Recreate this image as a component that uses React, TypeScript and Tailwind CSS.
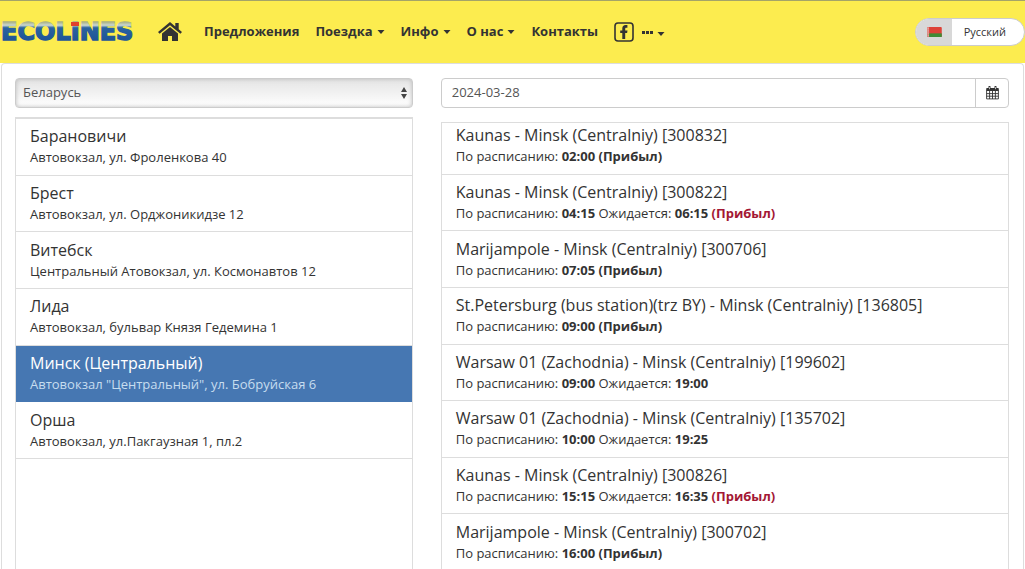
/** @format */

import React, { useState } from "react";

interface Stop {
    name: string;
    address: string;
}

interface Arrival {
    route: string;
    planned: string;
    expected?: string;
    arrived?: boolean;
}

const stops: Stop[] = [
    { name: "Барановичи", address: "Автовокзал, ул. Фроленкова 40" },
    { name: "Брест", address: "Автовокзал, ул. Орджоникидзе 12" },
    { name: "Витебск", address: "Центральный Атовокзал, ул. Космонавтов 12" },
    { name: "Лида", address: "Автовокзал, бульвар Князя Гедемина 1" },
    { name: "Минск (Центральный)", address: 'Автовокзал "Центральный", ул. Бобруйская 6' },
    { name: "Орша", address: "Автовокзал, ул.Пакгаузная 1, пл.2" },
];

const arrivals: Arrival[] = [
    { route: "Kaunas - Minsk (Centralniy) [300832]", planned: "02:00", arrived: true },
    { route: "Kaunas - Minsk (Centralniy) [300822]", planned: "04:15", expected: "06:15", arrived: true },
    { route: "Marijampole - Minsk (Centralniy) [300706]", planned: "07:05", arrived: true },
    { route: "St.Petersburg (bus station)(trz BY) - Minsk (Centralniy) [136805]", planned: "09:00", arrived: true },
    { route: "Warsaw 01 (Zachodnia) - Minsk (Centralniy) [199602]", planned: "09:00", expected: "19:00" },
    { route: "Warsaw 01 (Zachodnia) - Minsk (Centralniy) [135702]", planned: "10:00", expected: "19:25" },
    { route: "Kaunas - Minsk (Centralniy) [300826]", planned: "15:15", expected: "16:35", arrived: true },
    { route: "Marijampole - Minsk (Centralniy) [300702]", planned: "16:00", arrived: true },
];

const Logo: React.FunctionComponent = () => (
    <svg width="138" height="32" viewBox="0 0 138 32" aria-hidden="true">
        <defs>
            <linearGradient id="logo-fill" gradientUnits="userSpaceOnUse" x1="0" y1="6" x2="0" y2="24">
                <stop offset="0" stopColor="#a9b184" />
                <stop offset="0.18" stopColor="#ccd8d0" />
                <stop offset="0.32" stopColor="#2a62a0" />
                <stop offset="1" stopColor="#1f5597" />
            </linearGradient>
        </defs>
        <text x="1" y="24" fontFamily="DejaVu Sans" fontWeight="700" fontSize="24" fill="url(#logo-fill)" stroke="url(#logo-fill)" strokeWidth="1.4">
            ECOLINES
        </text>
        <rect x="71" y="6" width="8" height="4" fill="#e0412c" />
    </svg>
);

const HomeIcon: React.FunctionComponent = () => (
    <svg width="24" height="20" viewBox="0 0 24 20" fill="#333" aria-hidden="true">
        <path d="M12 0 0 10l1.6 1.8L12 3.2l10.4 8.6L24 10l-3.3-2.8V1h-3.4v3.4Z" />
        <path d="M12 5 4 11.6V19h6v-5h4v5h6v-7.4Z" />
    </svg>
);

const FacebookIcon: React.FunctionComponent = () => (
    <svg width="20" height="20" viewBox="0 0 20 20" aria-hidden="true">
        <rect x="1" y="1" width="18" height="18" rx="3" fill="none" stroke="#333" strokeWidth="1.6" />
        <path d="M8.3 17v-6H6.2V8.4h2.1V6.6c0-2.3 1.2-3.5 3.3-3.5h1.8v2.6h-1.1c-.8 0-1.1.4-1.1 1.1v1.6h2.3l-.4 2.6h-1.9v6Z" fill="#333" />
    </svg>
);

const CalendarIcon: React.FunctionComponent = () => (
    <svg width="13" height="14" viewBox="0 0 13 14" aria-hidden="true">
        <path d="M1 2h11a.8.8 0 0 1 .8.8V5H.2V2.8A.8.8 0 0 1 1 2Z" fill="#333" />
        <path d="M3.5.8v2.4M9.5.8v2.4" stroke="#333" strokeWidth="2" strokeLinecap="round" />
        <path d="M3.5 1.2v2M9.5 1.2v2" stroke="#fff" strokeWidth="0.7" />
        <path d="M.6 4.5v8.4h11.8V4.5M3.6 5v8M6.5 5v8M9.4 5v8M.6 7.6h11.8M.6 10.2h11.8" fill="none" stroke="#333" strokeWidth="0.9" />
    </svg>
);

const Caret: React.FunctionComponent = () => (
    <svg width="8" height="4" viewBox="0 0 8 4" fill="#333" aria-hidden="true">
        <path d="M0.5 0h7L4 4Z" />
    </svg>
);

const BelarusFlag: React.FunctionComponent = () => (
    <svg width="15" height="10" viewBox="0 0 16 11" aria-hidden="true">
        <rect width="16" height="11" rx="1" fill="#dd4238" />
        <rect y="7" width="16" height="4" fill="#3f8a35" />
        <rect width="2" height="11" fill="#e9a6a0" />
        <path d="M1 0v11" stroke="#d2544c" strokeWidth="0.8" strokeDasharray="1 1" />
    </svg>
);

const NavMenu: React.FunctionComponent<{ label: string }> = ({ label }) => (
    <button type="button" className="flex items-center gap-1">
        {label}
        <Caret />
    </button>
);

const App: React.FunctionComponent = () => {
    const [selected, setSelected] = useState("Минск (Центральный)");
    const [date, setDate] = useState("2024-03-28");

    return (
        <div className="flex h-screen flex-col overflow-hidden bg-white font-['Open_Sans',sans-serif] text-[#333]">
            <header className="flex h-[63px] shrink-0 items-center border-t border-[#a4a468] bg-[#fcec4f]">
                <a href="#" aria-label="Ecolines" className="shrink-0">
                    <Logo />
                </a>
                <nav className="ml-5 flex items-center gap-4 text-[13px] font-bold whitespace-nowrap">
                    <a href="#" aria-label="Главная" className="mr-1.5">
                        <HomeIcon />
                    </a>
                    <a href="#">Предложения</a>
                    <NavMenu label="Поездка" />
                    <NavMenu label="Инфо" />
                    <NavMenu label="О нас" />
                    <a href="#">Контакты</a>
                    <a href="#" aria-label="Facebook">
                        <FacebookIcon />
                    </a>
                    <button type="button" aria-label="Ещё" className="-ml-2 flex items-center gap-1">
                        <svg width="11" height="3" viewBox="0 0 11 3" fill="#333" aria-hidden="true">
                            <path d="M0 0h3v3H0zM4 0h3v3H4zM8 0h3v3H8z" />
                        </svg>
                        <span className="pt-1">
                            <Caret />
                        </span>
                    </button>
                </nav>
                <button type="button" className="ml-auto flex h-7 items-stretch overflow-hidden rounded-full border border-[#ccc] bg-white text-[11px]">
                    <span className="flex items-center bg-[#d8d8d8] pr-2.5 pl-[11px]">
                        <BelarusFlag />
                    </span>
                    <span className="flex items-center pr-[18px] pl-3">Русский</span>
                </button>
            </header>

            <main className="mr-px ml-px grid min-h-0 flex-1 grid-cols-[7fr_10fr] gap-7 rounded-t border border-b-0 border-[#ddd] pt-3.5 pr-3.5 pl-[13px]">
                <section className="flex min-h-0 flex-col">
                    <div className="relative mb-[9px] shrink-0">
                        <select
                            aria-label="Страна"
                            defaultValue="by"
                            className="block h-[30px] w-full appearance-none rounded border border-[#ccc] bg-linear-to-b from-[#e4e4e4] to-white px-[7px] text-[13px] text-[#555] shadow-[inset_0_0_4px_#bbb]"
                        >
                            <option value="by">Беларусь</option>
                        </select>
                        <svg width="6" height="12" viewBox="0 0 6 12" fill="#444" className="pointer-events-none absolute top-[9px] right-1.5" aria-hidden="true">
                            <path d="M3 0 6 5H0ZM3 12 0 7h6Z" />
                        </svg>
                    </div>
                    <div className="flex-1 border border-t-2 border-b-0 border-[#ddd]">
                        <ul className="grid min-h-[340px] auto-rows-fr">
                            {stops.map((stop) => (
                                <li key={stop.name} className="flex">
                                    <button
                                        type="button"
                                        aria-pressed={stop.name === selected}
                                        onClick={() => setSelected(stop.name)}
                                        className="group w-full border-b border-[#ddd] px-3.5 pb-1 text-left aria-pressed:border-[#4677b2] aria-pressed:bg-[#4677b2] aria-pressed:text-white"
                                    >
                                        <span className="block text-base leading-[25px]">{stop.name}</span>
                                        <span className="block text-[13px] leading-4 group-aria-pressed:text-[#c7ddef]">{stop.address}</span>
                                    </button>
                                </li>
                            ))}
                        </ul>
                    </div>
                </section>

                <section className="flex min-h-0 flex-col">
                    <div className="mb-3.5 flex h-[30px] shrink-0 rounded border border-[#ccc]">
                        <input
                            type="text"
                            aria-label="Дата"
                            value={date}
                            onChange={(e) => setDate(e.target.value)}
                            className="min-w-0 flex-1 px-2.5 text-[13px] text-[#555] outline-none"
                        />
                        <button type="button" aria-label="Календарь" className="flex w-[33px] items-center justify-center border-l border-[#ccc]">
                            <CalendarIcon />
                        </button>
                    </div>
                    <div className="min-h-0 flex-1 overflow-hidden border border-b-0 border-[#ddd]">
                        <ul className="-mt-[5px] grid min-h-[453px] auto-rows-fr">
                            {arrivals.map((arrival) => (
                                <li key={arrival.route} className="flex flex-col justify-center border-b border-[#ddd] px-3.5 pb-1">
                                    <h4 className="text-base leading-[25px]">{arrival.route}</h4>
                                    <p className="text-[13px] leading-4">
                                        По расписанию: <b>{arrival.planned}</b>
                                        {arrival.expected && (
                                            <>
                                                {" "}
                                                Ожидается: <b>{arrival.expected}</b>
                                            </>
                                        )}
                                        {arrival.arrived && <b className={arrival.expected ? "text-[#a31834]" : ""}> (Прибыл)</b>}
                                    </p>
                                </li>
                            ))}
                        </ul>
                    </div>
                </section>
            </main>
        </div>
    );
};

export default App;
